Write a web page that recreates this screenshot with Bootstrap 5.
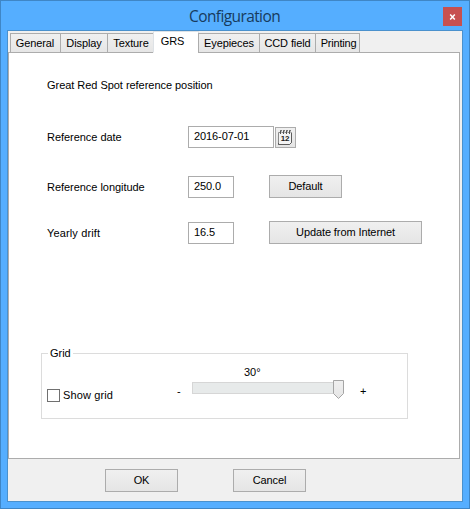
<!DOCTYPE html>
<html lang="en">
<head>
<meta charset="utf-8">
<title>Configuration</title>
<link rel="stylesheet" href="https://cdn.jsdelivr.net/npm/bootstrap@5.3.0/dist/css/bootstrap.min.css">
<style>
body{width:470px;height:509px;overflow:hidden;font:11px/14px "Liberation Sans",Arial,sans-serif;color:#000;letter-spacing:-.04px}
.window{width:470px;height:509px;background:#55aeff;border:1px solid #3f86c6;padding:0 6px 6px}
.titlebar{height:29px;padding-left:182px}
.titlebar h1{font:15.5px/20px "Open Sans","Noto Sans",sans-serif;color:#173b5e;margin:5px 0 0;letter-spacing:-.6px;width:110px;white-space:nowrap}
.close-btn{width:19px;height:19px;margin:6px 1px 0 auto;background:#c75050;border:0;padding:0;display:flex;align-items:center;justify-content:center}
.client{height:472px;border:1px solid #4a91cd;background:#f0f0f0}
.tabs{height:22px;padding-left:2px;align-items:flex-end;border:0;position:relative;flex-wrap:nowrap}
.tabs .nav-link{height:20px;padding:2px 0 0;border:1px solid #acacac;border-radius:0;background:linear-gradient(#f0f0f0,#e6e6e6);color:#000;text-align:center;margin:0 -1px 0 0;line-height:14px;letter-spacing:-.1px;white-space:nowrap}
.tabs .nav-link.active{height:22px;background:#fff;border-bottom-color:#fff;color:#000;padding:2px 7px 0 0}
.t1{width:51px}.t2{width:48px}.t3{width:47px}.t4{width:46px}.t5{width:62px}.t6{width:57px}.t7{width:45px}
.tabs .nav-link.t1{padding-right:1px}
.tabs .nav-link.t3{padding-left:1px}
.tabs .nav-link.last{margin-right:0;padding-left:2px;letter-spacing:-.2px}
.page{width:452px;height:407px;margin-top:-1px;border:1px solid #acacac;background:#fff;padding:25px 0 0 38px}
.line-date{margin-top:34px;height:22px}
.line-long{margin-top:27px;height:23px}
.line-drift{margin-top:23px;height:23px}
.caption-text{width:141px;padding-top:5px;white-space:nowrap}
.line-date .caption-text{padding-top:4px}
.line-drift .caption-text,.check-label{letter-spacing:.13px}
.field{height:22px;border:1px solid #acacac;border-radius:0;padding:2px 0 4px 5px;font:inherit;line-height:14px;color:#000;background:#fff;letter-spacing:-.1px}
.field.date{width:86px}.field.num{width:46px;margin-right:35px}
.push{height:23px;border:1px solid #acacac;border-radius:0;background:linear-gradient(#f0f0f0,#e5e5e5);color:#000;padding:0 0 1px;font:inherit;line-height:14px;letter-spacing:-.1px}
.push.std{width:73px}.push.wide{width:153px}
.push.cal{width:21px;height:21px;margin:1px 0 0 1px;padding:0 2px 1px 0}
.push.cal svg{flex:none}
.group{width:367px;height:73px;margin:102px 0 0 -6px;border:1px solid #dcdcdc}
.group legend{float:none;width:auto;font:inherit;line-height:14px;margin:0 0 0 6px;padding:0 2px;background:#fff}
.group-body{padding:7px 0 0 5px}
.form-check-input[type=checkbox].check{width:13px;height:13px;border:1px solid #707070;border-radius:0;margin:22px 3px 0 0;float:none;flex:none}
.check-label{margin-top:21px;width:114px}
.minus{margin-top:17px;width:15px}
.plus{margin-top:17px;margin-left:16px}
.slider{width:152px}
.slider-value{margin:-2px 0 0 52px}
.slider svg{display:block;margin-top:1px}
.footer-row{padding:10px 0 0 97px;gap:55px}
</style>
<script src="https://cdn.jsdelivr.net/npm/bootstrap@5.3.0/dist/js/bootstrap.bundle.min.js"></script>
</head>
<body>
<div class="window">
  <header class="titlebar d-flex align-items-start">
    <h1>Configuration</h1>
    <button class="close-btn" aria-label="Close"><svg width="7" height="6" viewBox="0 0 7 6"><path d="M1.2.5 5.8 5.5M5.8.5 1.2 5.5" stroke="#fff" stroke-width="1.5"/></svg></button>
  </header>
  <main class="client">
    <nav class="nav nav-tabs tabs">
      <a class="nav-link t1">General</a>
      <a class="nav-link t2">Display</a>
      <a class="nav-link t3">Texture</a>
      <a class="nav-link t4 active">GRS</a>
      <a class="nav-link t5">Eyepieces</a>
      <a class="nav-link t6">CCD field</a>
      <a class="nav-link t7 last">Printing</a>
    </nav>
    <section class="page">
      <div>Great Red Spot reference position</div>
      <div class="line-date d-flex">
        <div class="caption-text">Reference date</div>
        <input class="field date" value="2016-07-01" aria-label="Reference date">
        <button class="btn push cal d-flex align-items-center justify-content-center" aria-label="Pick date">
          <svg width="16" height="17" viewBox="0 0 16 17">
            <path d="M1.500 3.500h13v10l-2 2h-11z" fill="#f4f4f4" stroke="#8a8a8a"/>
            <path d="M1.500 14v1.500h11l2-2V4" fill="none" stroke="#5c5c5c"/>
            <path d="M3 1.500h2M6 1.500h2M9 1.500h2M12 1.500h2" stroke="#777"/>
            <path d="M3.500 2v3M6.500 2v3M9.500 2v3M12.500 2v3" stroke="#555"/>
            <path d="M4.500 2v2M7.500 2v2M10.500 2v2M13.500 2v2" stroke="#bbb"/>
            <text x="8" y="12" text-anchor="middle" font-family="Liberation Sans" font-size="8" font-weight="700" fill="#222">12</text>
          </svg>
        </button>
      </div>
      <div class="line-long d-flex">
        <div class="caption-text">Reference longitude</div>
        <input class="field num mt-auto" value="250.0" aria-label="Reference longitude">
        <button class="btn push std">Default</button>
      </div>
      <div class="line-drift d-flex">
        <div class="caption-text">Yearly drift</div>
        <input class="field num mt-auto" value="16.5" aria-label="Yearly drift">
        <button class="btn push wide">Update from Internet</button>
      </div>
      <fieldset class="group">
        <legend>Grid</legend>
        <div class="group-body d-flex">
          <input class="form-check-input check" type="checkbox" id="showGrid">
          <label class="check-label" for="showGrid">Show grid</label>
          <span class="minus">-</span>
          <div class="slider">
            <div class="slider-value">30°</div>
            <svg width="152" height="19" viewBox="0 0 152 19">
              <defs><linearGradient id="thumb" x2="0" y2="1"><stop stop-color="#f0f0f0"/><stop offset="1" stop-color="#e5e5e5"/></linearGradient></defs>
              <rect x=".5" y="2.5" width="147" height="11" fill="#e7eaea" stroke="#d6d6d6"/>
              <path d="M141.500.5h10v13l-5 5-5-5z" fill="url(#thumb)" stroke="#a5a5a5"/>
            </svg>
          </div>
          <span class="plus">+</span>
        </div>
      </fieldset>
    </section>
    <div class="footer-row d-flex">
      <button class="btn push std">OK</button>
      <button class="btn push std">Cancel</button>
    </div>
  </main>
</div>
</body>
</html>
